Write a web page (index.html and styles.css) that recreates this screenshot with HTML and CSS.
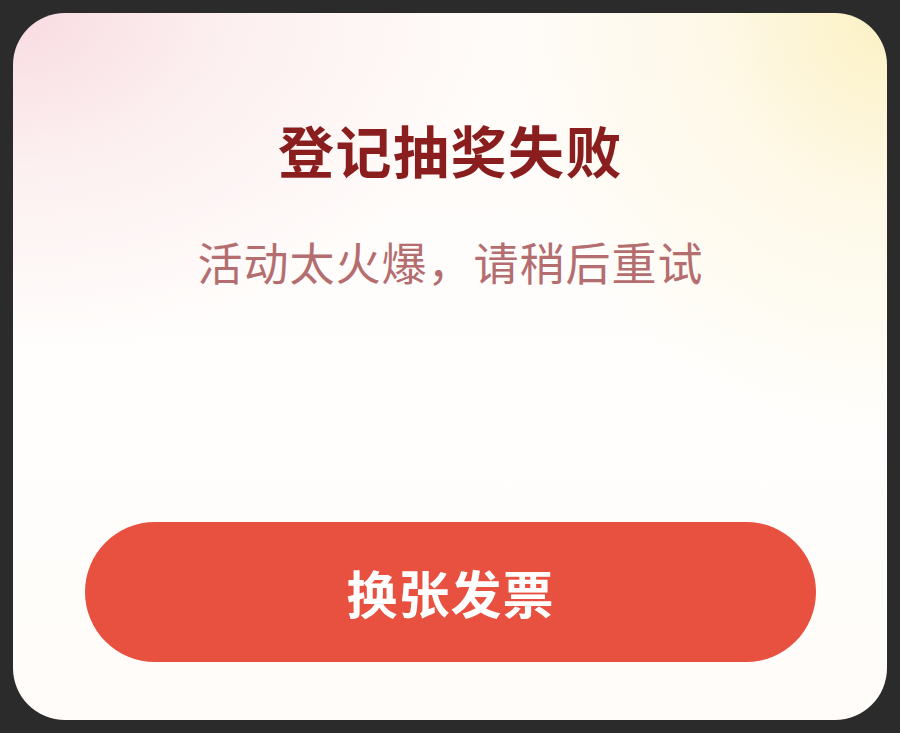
FILE: index.html
```html
<!DOCTYPE html>
<html lang="zh-CN">
<head>
<meta charset="utf-8">
<title>登记抽奖失败</title>
<link rel="stylesheet" href="styles.css">
</head>
<body>
<div class="card">
  <h1 class="title">登记抽奖失败</h1>
  <p class="subtitle">活动太火爆，请稍后重试</p>
  <button class="btn">换张发票</button>
</div>
</body>
</html>
```

FILE: styles.css
```css
html, body {
  margin: 0;
  padding: 0;
  background: #2b2b2b;
  width: 900px;
  height: 733px;
  overflow: hidden;
}
body {
  padding: 13px 13px 0 13px;
  box-sizing: border-box;
  font-family: "Noto Sans CJK SC", "Noto Sans", sans-serif;
}
.card {
  width: 874px;
  height: 707px;
  box-sizing: border-box;
  border-radius: 52px;
  padding: 108px 71px 58px 72px;
  display: flex;
  flex-direction: column;
  align-items: center;
  background:
    radial-gradient(ellipse 480px 340px at 0% 0%, rgba(248, 218, 225, 0.95), rgba(250, 230, 233, 0.55) 45%, rgba(255, 255, 255, 0) 100%),
    radial-gradient(ellipse 380px 420px at 100% 0%, rgba(252, 240, 192, 0.95), rgba(253, 246, 216, 0.55) 45%, rgba(255, 255, 255, 0) 100%),
    linear-gradient(180deg, #fffbf9 0%, #fffefc 55%, #fffcf9 100%);
}
.title {
  margin: 0;
  font-size: 56px;
  line-height: 56px;
  font-weight: 700;
  color: #8a1e1e;
  letter-spacing: 1.5px;
}
.subtitle {
  margin: 62px 0 0 0;
  font-size: 45px;
  line-height: 46px;
  font-weight: 400;
  color: #b46e70;
  letter-spacing: 1px;
}
.btn {
  margin-top: auto;
  width: 731px;
  height: 140px;
  border: none;
  border-radius: 70px;
  background: #e85040;
  color: #ffffff;
  font-family: "Noto Sans CJK SC", "Noto Sans", sans-serif;
  font-size: 51px;
  font-weight: 700;
  letter-spacing: 1px;
  padding: 0;
}
```
